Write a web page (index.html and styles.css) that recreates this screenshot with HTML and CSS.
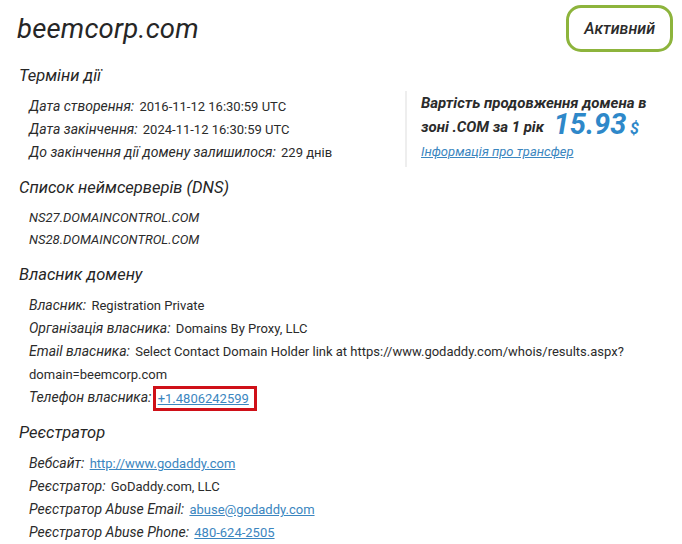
FILE: index.html
```html
<!DOCTYPE html>
<html lang="uk">
<head>
<meta charset="utf-8">
<title>beemcorp.com — WHOIS</title>
<link rel="stylesheet" href="styles.css">
</head>
<body>
<div class="page">
  <header class="head">
    <h1 class="domain">beemcorp.com</h1>
    <div class="status">Активний</div>
  </header>

  <div class="top">
    <section class="block terms">
      <h2 class="block-title">Терміни дії</h2>
      <ul class="rows">
        <li><span class="label">Дата створення:</span> <span class="value">2016-11-12 16:30:59 UTC</span></li>
        <li><span class="label">Дата закінчення:</span> <span class="value">2024-11-12 16:30:59 UTC</span></li>
        <li><span class="label">До закінчення дії домену залишилося:</span> <span class="value">229 днів</span></li>
      </ul>
    </section>

    <aside class="price">
      <p class="price-text">Вартість продовження домена в зоні .COM за 1 рік <span class="amount">15.93</span> <span class="currency">$</span></p>
      <a class="price-link" href="#">Інформація про трансфер</a>
    </aside>
  </div>

  <section class="block">
    <h2 class="block-title">Список неймсерверів (DNS)</h2>
    <ul class="rows ns">
      <li>NS27.DOMAINCONTROL.COM</li>
      <li>NS28.DOMAINCONTROL.COM</li>
    </ul>
  </section>

  <section class="block">
    <h2 class="block-title">Власник домену</h2>
    <ul class="rows">
      <li><span class="label">Власник:</span> <span class="value">Registration Private</span></li>
      <li><span class="label">Організація власника:</span> <span class="value">Domains By Proxy, LLC</span></li>
      <li><span class="label">Email власника:</span> <span class="value">Select Contact Domain Holder link at https://www.godaddy.com/whois/results.aspx?domain=beemcorp.com</span></li>
      <li><span class="label">Телефон власника:</span> <span class="mark"><a class="link" href="#">+1.4806242599</a></span></li>
    </ul>
  </section>

  <section class="block">
    <h2 class="block-title">Реєстратор</h2>
    <ul class="rows">
      <li><span class="label">Вебсайт:</span> <a class="link" href="#">http://www.godaddy.com</a></li>
      <li><span class="label">Реєстратор:</span> <span class="value">GoDaddy.com, LLC</span></li>
      <li><span class="label">Реєстратор Abuse Email:</span> <a class="link" href="#">abuse@godaddy.com</a></li>
      <li><span class="label">Реєстратор Abuse Phone:</span> <a class="link" href="#">480-624-2505</a></li>
    </ul>
  </section>
</div>
</body>
</html>
```

FILE: styles.css
```css
html, body {
  margin: 0;
  padding: 0;
  background: #ffffff;
}

body {
  font-family: Roboto, "Noto Sans", sans-serif;
  color: #2b2b2b;
  font-size: 13px;
}

.page {
  padding: 5px 9px 0 19px;
}

.head {
  display: flex;
  justify-content: space-between;
  align-items: center;
  height: 47px;
}

.domain {
  margin: 0 0 0 -2px;
  font-size: 27.5px;
  font-weight: 400;
  font-style: italic;
  color: #262626;
  letter-spacing: 0.2px;
}

.status {
  box-sizing: border-box;
  height: 47px;
  padding: 0 15px;
  display: flex;
  align-items: center;
  border: 3px solid #8db43c;
  border-radius: 15px;
  font-style: italic;
  font-weight: 500;
  font-size: 16px;
  color: #2b2b2b;
}

.top {
  display: flex;
  justify-content: space-between;
  align-items: flex-start;
}

.block {
  margin-top: 12px;
}

.block-title {
  margin: 0 0 7px;
  font-size: 16.5px;
  line-height: 24px;
  font-weight: 400;
  font-style: italic;
  color: #262626;
}

.rows {
  list-style: none;
  margin: 0;
  padding: 0 0 0 10px;
}

.rows li {
  line-height: 23px;
}

.label {
  font-style: italic;
  font-size: 14px;
  color: #2b2b2b;
  margin-right: 2px;
}

.value {
  color: #2b2b2b;
}

.ns li {
  font-style: italic;
  line-height: 22px;
}

.link {
  color: #3b86c0;
  text-decoration: underline;
}

/* highlighted phone number */
.mark {
  display: inline-block;
  vertical-align: middle;
  line-height: 19px;
  padding: 0 5px 0 2px;
  margin: -3px 0 -3px -4px;
  border: 3px solid #cf1018;
}

.price {
  margin: 39px 10px -6px 0;
  width: 236px;
  padding: 0 6px 4px 14px;
  border-left: 2px solid #eeeeee;
}

.price-text {
  margin: 0;
  font-size: 15px;
  line-height: 24px;
  font-weight: 700;
  font-style: italic;
  color: #2b2b2b;
}

.amount {
  font-size: 29px;
  line-height: 0;
  color: #2e88c9;
  margin-left: 6px;
  position: relative;
  top: 2px;
}

.currency {
  font-size: 16px;
  color: #2e88c9;
  position: relative;
  top: 2px;
}

.price-link {
  display: block;
  margin-top: 2px;
  font-size: 13px;
  font-style: italic;
  line-height: 22px;
  color: #3b86c0;
}
```
